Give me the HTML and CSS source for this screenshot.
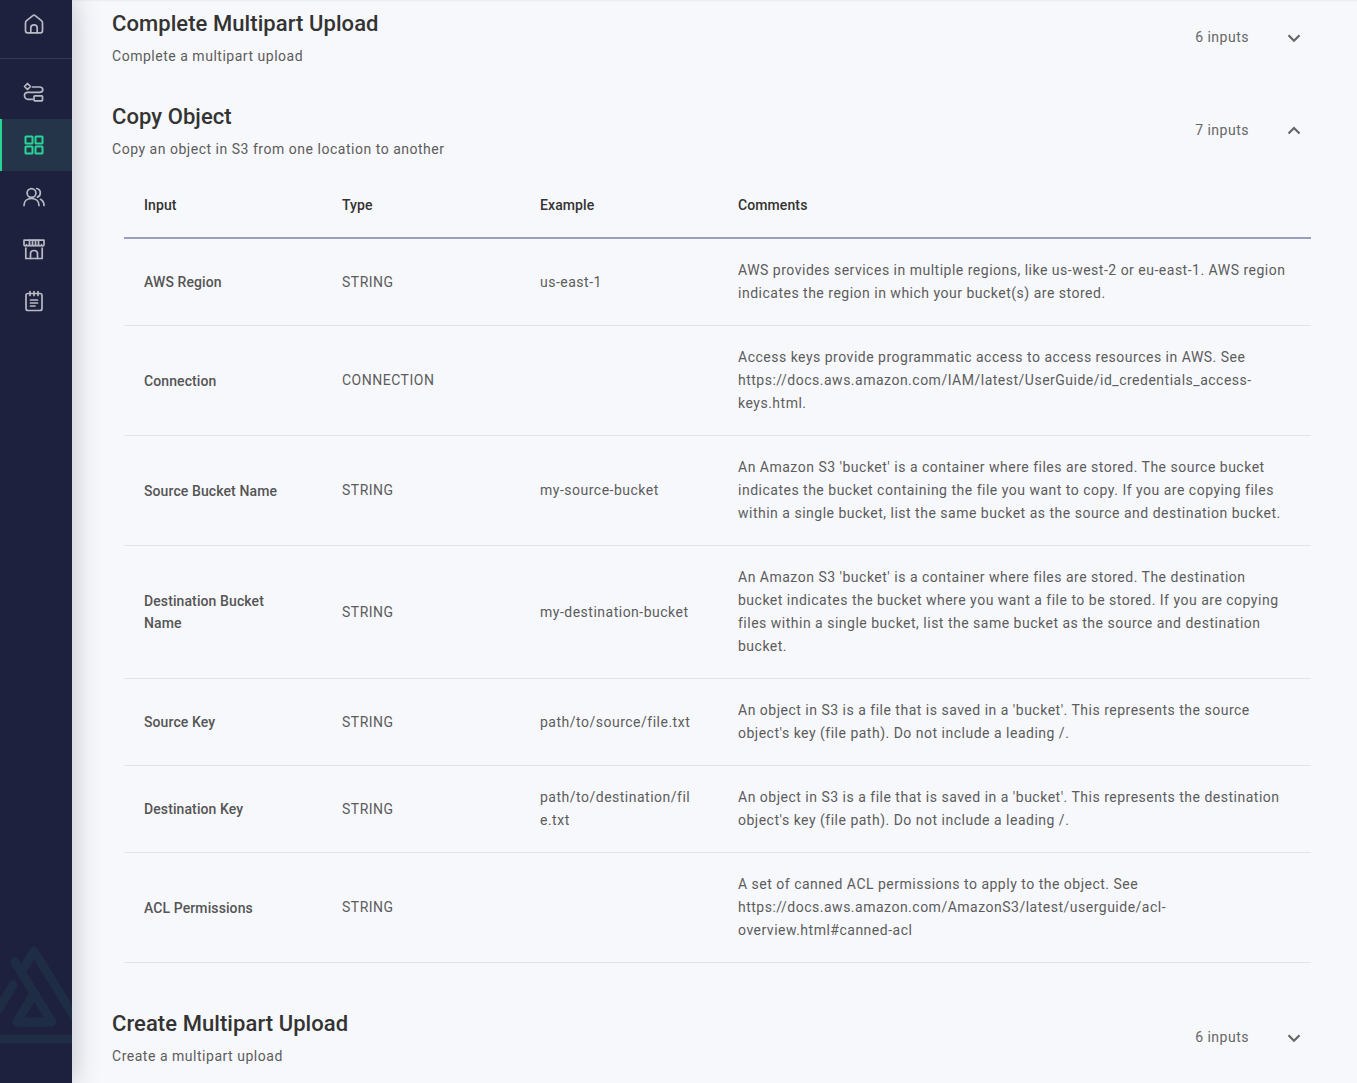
FILE: index.html
```html
<!DOCTYPE html>
<html lang="en">
<head>
<meta charset="utf-8">
<title>Amazon S3 actions</title>
<link rel="stylesheet" href="styles.css">
</head>
<body>
<div class="app">
  <nav class="sidebar">
    <div class="home">
      <svg class="icon" viewBox="0 0 24 24"><path d="M3.500 11C3.500 10 3.900 9.300 4.600 8.700L10.800 3.700C11.500 3.100 12.500 3.100 13.200 3.700L19.400 8.700C20.100 9.300 20.500 10 20.500 11V18.800C20.500 20 19.700 20.800 18.500 20.800H5.500C4.300 20.800 3.500 20 3.500 18.800Z"/><path d="M8.800 20.800V15.800C8.800 14 10.200 12.800 12 12.800C13.800 12.800 15.200 14 15.200 15.800V20.800"/></svg>
    </div>
    <div class="nav-item">
      <svg class="icon" viewBox="0 0 24 24"><path d="M5.500 2.500L8.500 5.500L5.500 8.500L2.500 5.500Z"/><path d="M10.500 6H17.500C19.500 6 20.800 7.300 20.800 8.800C20.800 10.300 19.500 11.300 17.500 11.300H6C4 11.300 2.500 12.500 2.500 14.500C2.500 16.500 4 18.300 6 18.300H10.500"/><rect x="12" y="14.800" width="8.500" height="5" rx=".8"/></svg>
    </div>
    <div class="nav-item active">
      <svg class="icon" viewBox="0 0 24 24"><rect x="3.500" y="3.500" width="7" height="7" rx=".6"/><rect x="13.500" y="3.500" width="7" height="7" rx=".6"/><rect x="3.500" y="13.500" width="7" height="7" rx=".6"/><rect x="13.500" y="13.500" width="7" height="7" rx=".6"/></svg>
    </div>
    <div class="nav-item">
      <svg class="icon" viewBox="0 0 24 24"><circle cx="9.500" cy="8" r="4.400"/><path d="M2 20.500C2 16.300 5 13.500 9.500 13.500C14 13.500 17 16.300 17 20.500"/><path d="M14.800 3.500C16.900 3.900 18.300 5.700 18.300 7.900C18.300 9.900 17.100 11.500 15.300 12.100"/><path d="M18.500 14.300C20.700 15.500 22 17.800 22 20.500"/></svg>
    </div>
    <div class="nav-item">
      <svg class="icon" viewBox="0 0 24 24"><path d="M3.800 11V21.500H20.200V11"/><path d="M2 3.200H22L22 7.500C22 8.400 21.500 9 20.800 9C20 9 19.500 8.400 19.500 7.500C19.500 8.400 18.800 9 18 9C17.200 9 16.500 8.400 16.500 7.500C16.500 8.400 15.800 9 15 9C14.200 9 13.500 8.400 13.500 7.500C13.500 8.400 12.800 9 12 9C11.200 9 10.500 8.400 10.500 7.500C10.500 8.400 9.800 9 9 9C8.200 9 7.500 8.400 7.500 7.500C7.500 8.400 6.800 9 6 9C5.200 9 4.500 8.400 4.500 7.500C4.500 8.400 4 9 3.200 9C2.500 9 2 8.400 2 7.500Z"/><path d="M7.500 3.200V7.500M10.500 3.200V7.500M13.500 3.200V7.500M16.500 3.200V7.500"/><path d="M8.500 21.500V16.500C8.500 14.700 10 13.500 12 13.500C14 13.500 15.500 14.700 15.500 16.500V21.500"/></svg>
    </div>
    <div class="nav-item">
      <svg class="icon" viewBox="0 0 24 24"><rect x="4" y="4.500" width="16" height="17" rx="2"/><path d="M8 2.500V6.500M12 2.500V6.500M16 2.500V6.500"/><path d="M8.500 11H15.500M8.500 14H15.500M8.500 17H13"/></svg>
    </div>
    <svg class="logo" viewBox="0 0 72 104"><path d="M15 18L52 78H17L33 51"/><path d="M34 7L80 82"/><path d="M34 7L24 24"/><path d="M13 41L-5 71"/><path d="M-2 95H74"/></svg>
  </nav>
  <main class="content">
    <section class="action first">
      <div class="action-head">
        <div>
          <h2>Complete Multipart Upload</h2>
          <p class="desc">Complete a multipart upload</p>
        </div>
        <div class="meta"><span>6 inputs</span><svg class="chevron" viewBox="0 0 24 24"><path d="M6.500 10.300L12 15.800L17.500 10.300"/></svg></div>
      </div>
    </section>
    <section class="action">
      <div class="action-head">
        <div>
          <h2>Copy Object</h2>
          <p class="desc">Copy an object in S3 from one location to another</p>
        </div>
        <div class="meta"><span>7 inputs</span><svg class="chevron" viewBox="0 0 24 24"><path d="M6.500 15.500L12 10L17.500 15.500"/></svg></div>
      </div>
      <table>
        <thead>
          <tr><th>Input</th><th>Type</th><th>Example</th><th>Comments</th></tr>
        </thead>
        <tbody>
          <tr><td class="name">AWS Region</td><td>STRING</td><td>us-east-1</td><td>AWS provides services in multiple regions, like us-west-2 or eu-east-1. AWS region indicates the region in which your bucket(s) are stored.</td></tr>
          <tr><td class="name">Connection</td><td>CONNECTION</td><td></td><td>Access keys provide programmatic access to access resources in AWS. See https://docs.aws.amazon.com/IAM/latest/UserGuide/id_credentials_access-keys.html.</td></tr>
          <tr><td class="name">Source Bucket Name</td><td>STRING</td><td>my-source-bucket</td><td>An Amazon S3 'bucket' is a container where files are stored. The source bucket indicates the bucket containing the file you want to copy. If you are copying files within a single bucket, list the same bucket as the source and destination bucket.</td></tr>
          <tr><td class="name">Destination Bucket Name</td><td>STRING</td><td>my-destination-bucket</td><td>An Amazon S3 'bucket' is a container where files are stored. The destination bucket indicates the bucket where you want a file to be stored. If you are copying files within a single bucket, list the same bucket as the source and destination bucket.</td></tr>
          <tr><td class="name">Source Key</td><td>STRING</td><td>path/to/source/file.txt</td><td>An object in S3 is a file that is saved in a 'bucket'. This represents the source object's key (file path). Do not include a leading /.</td></tr>
          <tr><td class="name">Destination Key</td><td>STRING</td><td>path/to/destination/file.txt</td><td>An object in S3 is a file that is saved in a 'bucket'. This represents the destination object's key (file path). Do not include a leading /.</td></tr>
          <tr><td class="name">ACL Permissions</td><td>STRING</td><td></td><td>A set of canned ACL permissions to apply to the object. See https://docs.aws.amazon.com/AmazonS3/latest/userguide/acl-overview.html#canned-acl</td></tr>
        </tbody>
      </table>
    </section>
    <section class="action last">
      <div class="action-head">
        <div>
          <h2>Create Multipart Upload</h2>
          <p class="desc">Create a multipart upload</p>
        </div>
        <div class="meta"><span>6 inputs</span><svg class="chevron" viewBox="0 0 24 24"><path d="M6.500 10.300L12 15.800L17.500 10.300"/></svg></div>
      </div>
    </section>
  </main>
</div>
</body>
</html>
```

FILE: styles.css
```css
* { box-sizing: border-box; }
html, body { margin: 0; height: 100%; overflow: hidden; }
body { font-family: Roboto, "Liberation Sans", sans-serif; background: #f7f8fb; color: #555; }
.app { display: flex; height: 1083px; overflow: hidden; }

.sidebar { position: relative; flex: 0 0 72px; background: #1e213e; overflow: hidden; box-shadow: 0 0 28px rgba(30, 33, 62, .28); z-index: 1; }
.home { height: 59px; display: flex; align-items: center; justify-content: center; padding: 0 4px 10px 0; border-bottom: 1px solid #33364f; margin-bottom: 8px; }
.nav-item { height: 52px; display: flex; align-items: center; justify-content: center; padding-right: 4px; }
.nav-item.active { background: #253549; border-left: 2px solid #2ad497; padding-right: 6px; }
.icon { width: 24px; height: 24px; fill: none; stroke: #b8bac4; stroke-width: 1.7; stroke-linecap: round; stroke-linejoin: round; }
.active .icon { stroke: #2ad497; stroke-width: 2; }
.logo { position: absolute; left: 0; top: 944px; width: 72px; height: 104px; fill: none; stroke: #1e2c44; stroke-width: 9; stroke-linecap: round; stroke-linejoin: round; }

.content { flex: 1; padding: 0 46px 0 40px; min-width: 0; box-shadow: inset 0 2px 2px -1px rgba(0, 0, 0, .05); }
.action { padding-top: 35px; }
.action.first { padding-top: 10px; }
.action.last { padding-top: 47px; }
.action-head { display: flex; justify-content: space-between; align-items: center; }
h2 { margin: 0; font-size: 22px; line-height: 28px; font-weight: 500; letter-spacing: .07px; color: #333; }
.desc { margin: 6px 0 0; font-size: 14px; line-height: 24px; letter-spacing: .52px; color: #5c5c5c; }
.meta { display: flex; align-items: center; margin-bottom: 4px; font-size: 14px; letter-spacing: .5px; color: #666; }
.chevron { width: 24px; height: 24px; margin-left: 33px; margin-right: 5px; fill: none; stroke: #666; stroke-width: 2.2; }

table { width: 1187px; margin: 11px 0 0 12px; border-collapse: collapse; table-layout: fixed; font-size: 14px; letter-spacing: .5px; }
th:nth-child(-n+3), td:nth-child(-n+3) { width: 198px; }
th { height: 66px; padding: 0 20px; text-align: left; font-size: 14px; font-weight: 500; color: #333; letter-spacing: .1px; border-bottom: 2px solid #9a9fbe; }
td { padding: 20px; line-height: 23px; border-bottom: 1px solid #e3e4e8; color: #5c5c5c; overflow-wrap: anywhere; }
td:nth-child(3) { word-break: break-all; }
td.name { font-size: 14px; font-weight: 500; line-height: 22px; letter-spacing: .1px; color: #555; }
```
